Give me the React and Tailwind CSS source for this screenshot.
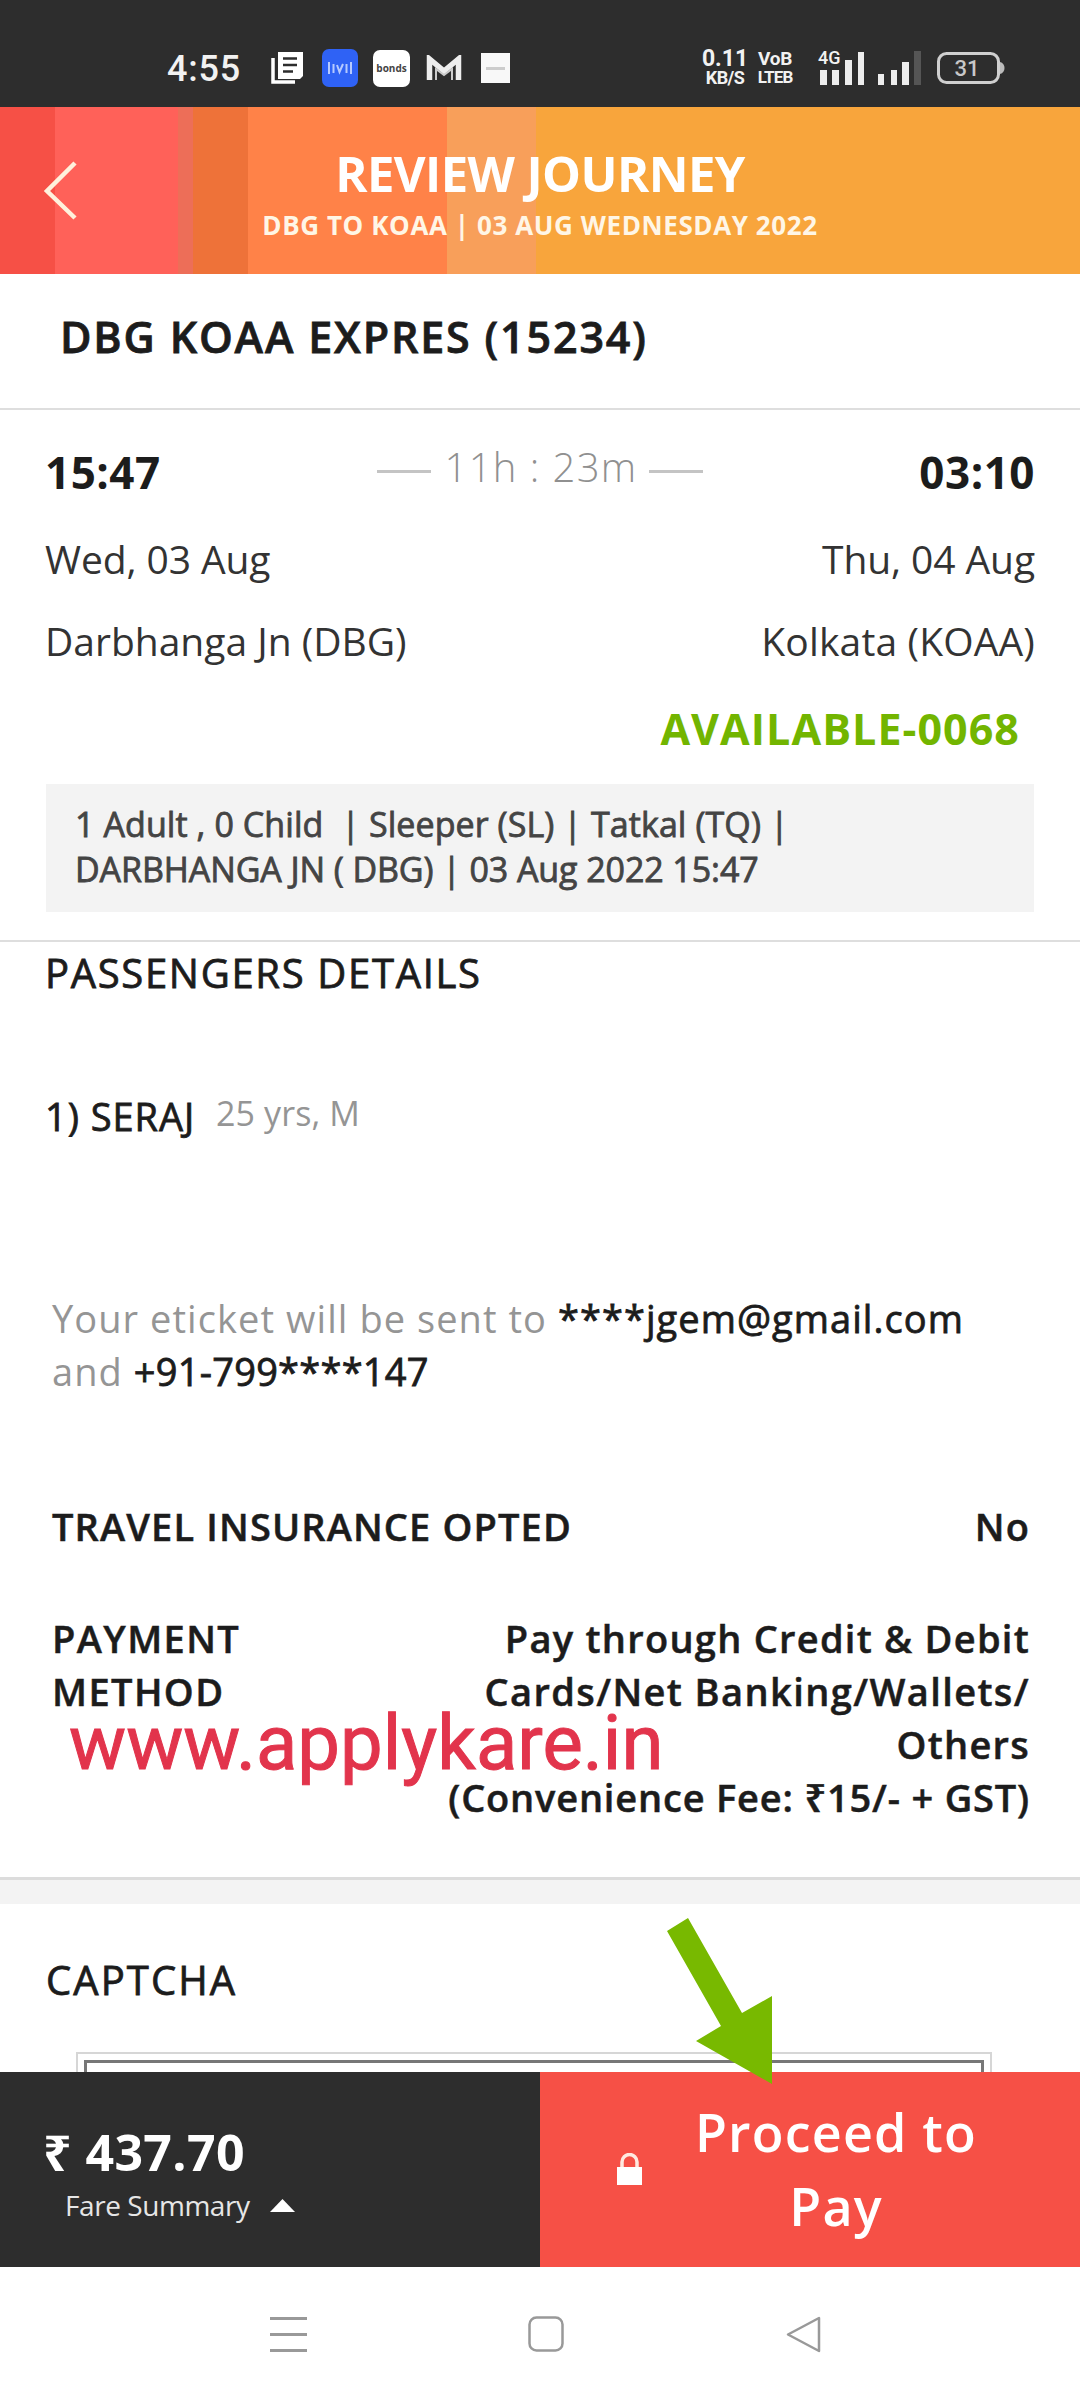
import React from "react";

const BAR = "#2d2d2d";

function StatusBar() {
  return (
    <div className="flex h-[107px] items-center bg-[#2d2d2d] pt-[29px] pl-[167px] pr-[75px] text-[#f2f2f2] font-['Roboto',sans-serif]">
      <span className="w-[76px] pt-[2px] text-[36px] leading-[40px] font-medium tracking-[0.8px]">4:55</span>
      <svg className="ml-[28px]" width="34" height="32" viewBox="0 0 34 32">
        <path d="M7 0H32V24L29 27H7z" fill="#fff" />
        <path d="M12 6.500H26M12 13H26M12 19.500H22" stroke={BAR} strokeWidth="2.500" />
        <path d="M2 6V30H24" fill="none" stroke="#fff" strokeWidth="3.500" />
      </svg>
      <div className="ml-[17px] flex h-[38px] w-[36px] items-center justify-center rounded-[7px] bg-[#2f62f5]">
        <svg width="26" height="14" viewBox="0 0 26 14" fill="none" stroke="#b5c9ff" strokeWidth="2">
          <path d="M2 1V13M6.500 3V12M24 1V13M19.500 3V12M10 4L12.500 11L16 3" />
        </svg>
      </div>
      <div className="ml-[15px] flex h-[37px] w-[37px] items-center justify-center rounded-[7px] bg-white">
        <span className="font-['Open_Sans',sans-serif] text-[10px] leading-none font-bold text-[#444]">bonds</span>
      </div>
      <svg className="ml-[16px]" width="36" height="26" viewBox="0 0 36 26">
        <path d="M3.500 25V4L18 16L32.500 4V25" fill="none" stroke="#eee" strokeWidth="5.500" />
        <path d="M10 25V14L18 20L26 14V25" fill="none" stroke="#ccc" strokeWidth="2" />
      </svg>
      <div className="ml-[19px] flex h-[30px] w-[29px] items-center justify-center bg-[#f8f8f8]">
        <div className="h-[3px] w-[19px] bg-[#ccc]" />
      </div>
      <div className="ml-auto flex items-center">
        <div className="flex w-[46px] flex-col items-center font-bold">
          <span className="text-[23px] leading-[19px]">0.11</span>
          <span className="text-[18px] leading-[20px] tracking-[-0.6px]">KB/S</span>
        </div>
        <div className="ml-[8px] flex w-[38px] flex-col items-center font-bold">
          <span className="text-[19px] leading-[18px] tracking-[-0.3px]">VoB</span>
          <span className="text-[17px] leading-[19px] tracking-[-0.9px]">LTEB</span>
        </div>
        <svg className="ml-[24px] overflow-visible" width="104" height="36" viewBox="0 0 104 36">
          <text x="0" y="14" fontSize="18" fontWeight="500" fill="#f2f2f2">4G</text>
          <path d="M2 20h7v15H2zM14 20h7v15h-7zM27 10h7v25h-7zM40 2h6v33h-6z" fill="#ededed" />
          <path d="M60 24h6v11h-6zM73 20h6v15h-6zM84 12h7v23h-7z" fill="#ededed" />
          <path d="M96 1h7v34h-7z" fill="#555" />
        </svg>
        <svg className="ml-[15px]" width="68" height="34" viewBox="0 0 68 34">
          <rect x="1.500" y="2.500" width="60" height="29" rx="8" fill="none" stroke="#cfcfcf" strokeWidth="3" />
          <path d="M63 11c6 1 6 11 0 12z" fill="#bbb" />
          <text x="30" y="25" fontSize="22" textAnchor="middle" fontWeight="500" fill="#c8c8c8">31</text>
        </svg>
      </div>
    </div>
  );
}

function Header() {
  return (
    <div className="relative h-[167px] text-white">
      <div className="flex h-full">
        <div className="w-[55px] bg-[#f65046]" />
        <div className="w-[123px] bg-[#ff6159]" />
        <div className="w-[15px] bg-[#ed6e58]" />
        <div className="w-[55px] bg-[#ee7239]" />
        <div className="w-[199px] bg-[#ff8248]" />
        <div className="w-[89px] bg-[#f89f5a]" />
        <div className="flex-1 bg-[#f8a53c]" />
      </div>
      <div className="absolute inset-0 flex flex-col items-center pt-[36px]">
        <h1 className="text-[49px] leading-[60px] font-bold tracking-[-0.6px]">REVIEW JOURNEY</h1>
        <p className="mt-1 text-[26px] leading-[36px] font-bold tracking-[0.59px] text-[#fff6e6]">
          DBG TO KOAA | 03 AUG WEDNESDAY 2022
        </p>
      </div>
      <svg className="absolute left-[43px] top-[53px]" width="36" height="62" viewBox="0 0 36 62">
        <path d="M32 3L4 31L32 58" fill="none" stroke="#fff1dc" strokeWidth="4.500" />
      </svg>
    </div>
  );
}

function Trip() {
  return (
    <section className="flex flex-col pl-[45px] pr-[45px] pt-[32px] text-[#1c1c1c]">
      <div className="flex h-[60px] justify-between text-[44px] leading-[60px] font-bold tracking-[0.49px]">
        <span>15:47</span>
        <div className="-mt-[5px] flex h-[60px] items-center gap-[13px] text-[40px] font-light tracking-[1.4px] text-[#909090]">
          <span className="mt-[9px] h-[3px] w-[54px] bg-[#c4c4c4]" />
          <span>11h : 23m</span>
          <span className="-ml-[2px] mt-[9px] h-[3px] w-[54px] bg-[#c4c4c4]" />
        </div>
        <span>03:10</span>
      </div>
      <div className="mt-[30px] flex justify-between text-[39px] leading-[54px] tracking-[-0.1px] text-[#333]">
        <span>Wed, 03 Aug</span>
        <span>Thu, 04 Aug</span>
      </div>
      <div className="mt-[28px] flex justify-between text-[39px] leading-[54px] text-[#333]">
        <span>Darbhanga Jn (DBG)</span>
        <span className="tracking-[0.15px]">Kolkata (KOAA)</span>
      </div>
      <p className="mt-[31px] mr-[15px] self-end text-[43px] leading-[60px] font-bold tracking-[1.05px] text-[#72b500]">
        AVAILABLE-0068
      </p>
      <div className="mt-[25px] mr-px ml-px h-[128px] bg-[#f3f3f3] pl-[29px] pt-[18px] text-[34px] leading-[45px] text-[#444] [-webkit-text-stroke:0.8px_#444]">
        <p className="whitespace-pre tracking-[0.08px]">{"1 Adult , 0 Child  | Sleeper (SL) | Tatkal (TQ) |"}</p>
        <p className="tracking-[-0.09px]">DARBHANGA JN ( DBG) | 03 Aug 2022 15:47</p>
      </div>
    </section>
  );
}

function Passengers() {
  return (
    <section className="px-[45px] pt-[4px] text-[#1c1c1c]">
      <h2 className="text-[40px] leading-[54px] tracking-[1.68px] [-webkit-text-stroke:0.8px_#1c1c1c]">PASSENGERS DETAILS</h2>
      <div className="mt-[90px] flex gap-[21px] text-[38px] leading-[52px] tracking-[0.95px]">
        <span className="[-webkit-text-stroke:0.8px_#1c1c1c]">1) SERAJ</span>
        <span className="-mt-[3px] text-[34px] tracking-[0.1px] text-[#959595]">25 yrs, M</span>
      </div>
    </section>
  );
}

function Details() {
  return (
    <section className="pl-[52px] pr-[50px] text-[38px] leading-[53px] text-[#1c1c1c]">
      <div className="mt-[150px] tracking-[1.06px] text-[#959595]">
        <p>
          Your eticket will be sent to{" "}
          <span className="text-[#1c1c1c] [-webkit-text-stroke:0.8px_#1c1c1c]">****jgem@gmail.com</span>
        </p>
        <p>
          and <span className="tracking-[0.25px] text-[#1c1c1c] [-webkit-text-stroke:0.8px_#1c1c1c]">+91-799****147</span>
        </p>
      </div>
      <div className="mt-[102px] flex justify-between font-semibold tracking-[1.14px] [-webkit-text-stroke:0.5px_#1c1c1c]">
        <span>TRAVEL INSURANCE OPTED</span>
        <span>No</span>
      </div>
      <div className="relative mt-[59px] flex justify-between font-semibold">
        <p className="tracking-[1.4px] [-webkit-text-stroke:0.5px_#1c1c1c]">PAYMENT<br />METHOD</p>
        <p className="text-right tracking-[1.27px] [-webkit-text-stroke:0.5px_#1c1c1c]">
          Pay through Credit &amp; Debit<br /><span className="tracking-[1.4px]">Cards/Net Banking/Wallets/</span><br />Others<br />
          <span className="tracking-[0.82px]">(Convenience Fee: ₹15/- + GST)</span>
        </p>
        <span className="absolute left-[17px] top-[86px] text-[76px] leading-[90px] font-normal tracking-[0.05px] text-[#e2344c] [-webkit-text-stroke:1px_#e2344c] font-['Roboto',sans-serif]">
          www.applykare.in
        </span>
      </div>
    </section>
  );
}

function Captcha() {
  return (
    <section className="mt-[53px]">
      <div className="h-[27px] border-t-[3px] border-[#dcdcdc] bg-[#f3f3f3]" />
      <h2 className="mt-[49px] ml-[46px] text-[40px] leading-[54px] tracking-[2.1px] text-[#1c1c1c] [-webkit-text-stroke:0.8px_#1c1c1c]">CAPTCHA</h2>
      <div className="mt-[45px] ml-[76px] h-[60px] w-[916px] border-2 border-[#d6d6d6] px-[6px] pt-[6px]">
        <div className="h-full border-[3px] border-[#777]" />
      </div>
    </section>
  );
}

function PayBar() {
  return (
    <div className="relative flex h-[195px] text-white">
      <div className="w-[540px] bg-[#2d2d2d] pt-[50px]">
        <p className="ml-[43px] text-[50px] leading-[60px] font-bold tracking-[0.4px]">₹ 437.70</p>
        <div className="mt-[3px] ml-[65px] flex items-center text-[28px] leading-[40px] tracking-[-0.44px] text-[#e6e6e6]">
          Fare Summary
          <svg className="ml-[20px]" width="25" height="13" viewBox="0 0 25 13">
            <path d="M12.500 0L25 13H0z" fill="#fff" />
          </svg>
        </div>
      </div>
      <div className="flex flex-1 bg-[#f65046]">
        <svg className="mt-[81px] ml-[76px]" width="27" height="32" viewBox="0 0 27 32">
          <path d="M6 15V9a7.500 7.500 0 0 1 15 0V15" fill="none" stroke="#ffe9e0" strokeWidth="3.500" />
          <path d="M1 14H26V32H1z" fill="#fff" />
        </svg>
        <p className="ml-[48px] w-[290px] pt-[23px] text-center text-[52px] leading-[74px] font-semibold tracking-[1.2px]">
          Proceed to<br />Pay
        </p>
      </div>
      <svg className="absolute left-[660px] -top-[160px]" width="120" height="180" viewBox="0 0 120 180">
        <path d="M7 19L28 6L82 101L112 84V172L36 129L61 114z" fill="#78b900" />
      </svg>
    </div>
  );
}

function NavBar() {
  return (
    <div className="flex h-[133px] justify-between pt-[46px] pl-[269px] pr-[259px]">
      <svg width="38" height="44" viewBox="0 0 38 44">
        <path d="M1 5.500H38M1 21.500H38M1 37.500H38" stroke="#999" strokeWidth="3" />
      </svg>
      <svg width="38" height="44" viewBox="0 0 38 44">
        <rect x="2.500" y="4.500" width="33" height="33" rx="7" fill="none" stroke="#999" strokeWidth="2.500" />
      </svg>
      <svg width="36" height="44" viewBox="0 0 36 44">
        <path d="M34 5V38L3 21.500z" fill="none" stroke="#999" strokeWidth="2.500" strokeLinejoin="round" />
      </svg>
    </div>
  );
}

export default function App() {
  return (
    <div className="flex h-[2400px] w-[1080px] flex-col overflow-hidden bg-white font-['Open_Sans','Noto_Sans',sans-serif]">
      <StatusBar />
      <Header />
      <main className="h-[1798px] overflow-hidden">
        <h2 className="h-[136px] border-b-2 border-[#dedede] pl-[60px] pt-[33px] text-[43px] leading-[60px] font-semibold tracking-[1.85px] text-[#1c1c1c] [-webkit-text-stroke:0.8px_#1c1c1c]">
          DBG KOAA EXPRES (15234)
        </h2>
        <Trip />
        <div className="mt-[28px] h-[2px] bg-[#dedede]" />
        <Passengers />
        <Details />
        <Captcha />
      </main>
      <PayBar />
      <NavBar />
    </div>
  );
}
